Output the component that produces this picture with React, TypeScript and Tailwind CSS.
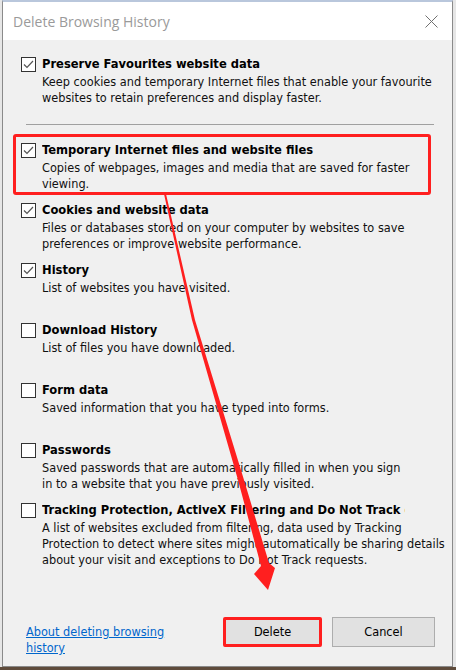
import React from "react";

const items = [
  {
    title: "Temporary Internet files and website files",
    desc: ["Copies of webpages, images and media that are saved for faster", "viewing."],
    checked: true,
  },
  {
    title: "Cookies and website data",
    desc: ["Files or databases stored on your computer by websites to save", "preferences or improve website performance."],
    checked: true,
  },
  { title: "History", desc: ["List of websites you have visited."], checked: true },
  { title: "Download History", desc: ["List of files you have downloaded."], checked: false },
  { title: "Form data", desc: ["Saved information that you have typed into forms."], checked: false },
  {
    title: "Passwords",
    desc: ["Saved passwords that are automatically filled in when you sign", "in to a website that you have previously visited."],
    checked: false,
  },
  {
    title: "Tracking Protection, ActiveX Filtering and Do Not Track data",
    desc: [
      "A list of websites excluded from filtering, data used by Tracking",
      "Protection to detect where sites might automatically be sharing details",
      "about your visit and exceptions to Do Not Track requests.",
    ],
    checked: false,
  },
];

function Box({ checked }: { checked: boolean }) {
  return (
    <span className="mt-[1px] flex h-[15px] w-[15px] shrink-0 items-center justify-center border border-[#333] bg-white">
      {checked && (
        <svg width="13" height="13" viewBox="0 0 13 13">
          <path d="M2 6.5 L5 9.5 L11 3" fill="none" stroke="#555" strokeWidth="1.2" />
        </svg>
      )}
    </span>
  );
}

function Option({ title, desc, checked }: { title: string; desc: string[]; checked: boolean }) {
  return (
    <div className="flex gap-[6px]">
      <Box checked={checked} />
      <div className="flex flex-col">
        <div className="w-[363px] overflow-hidden whitespace-nowrap text-[12.8px] font-bold leading-[16px] text-black">
          {title}
        </div>
        <div className="mt-[2px] text-[12.6px] leading-[16px] text-[#111]">
          {desc.map((d) => (
            <div key={d} className="whitespace-nowrap">{d}</div>
          ))}
        </div>
      </div>
    </div>
  );
}

export default function App() {
  return (
    <div className="relative h-[670px] w-[456px] overflow-hidden bg-[#e6e6e6] font-['DejaVu_Sans_Condensed','DejaVu_Sans',sans-serif]">
      <div className="ml-[2px] flex h-[667px] w-[451px] flex-col border-x border-b border-t-2 border-x-[#8a8a8a] border-b-[#8a8a8a] border-t-[#b9c7dc]">
        <div className="flex h-[38px] items-center justify-between bg-white pl-[10px] pr-[14px]">
          <span className="font-['Open_Sans',sans-serif] text-[14px] text-[#9a9a9a]">Delete Browsing History</span>
          <svg width="13" height="13" viewBox="0 0 13 13">
            <path d="M0.5 0.5 L12.5 12.5 M12.5 0.5 L0.5 12.5" stroke="#707070" strokeWidth="1" />
          </svg>
        </div>
        <div className="flex flex-1 flex-col bg-[#f0f0f0] pl-[18px] pr-[17px] pt-[16px]">
          <div className="h-[60px]">
            <Option
              title="Preserve Favourites website data"
              desc={["Keep cookies and temporary Internet files that enable your favourite", "websites to retain preferences and display faster."]}
              checked
            />
          </div>
          <div className="ml-[5px] mr-[1px] mt-[8px] h-px bg-[#a0a0a0]" />
          <div className="mt-[17px] flex flex-col">
            {items.map((it) => (
              <div key={it.title} className="h-[60px]">
                <Option {...it} />
              </div>
            ))}
          </div>
          <div className="mt-auto flex items-start pb-[10px]">
            <a className="ml-[5px] mt-[7px] w-[150px] text-[12.6px] leading-[16px] text-[#0066cc] underline">
              About deleting browsing history
            </a>
            <button className="ml-auto h-[30px] w-[99px] rounded-[2px] border-[3px] border-[#ff1f1f] bg-[#e1e1e1] text-[12.6px] text-black">
              Delete
            </button>
            <button className="ml-[10px] h-[30px] w-[103px] border border-[#adadad] bg-[#e1e1e1] text-[12.6px] text-black">
              Cancel
            </button>
          </div>
        </div>
      </div>
      <div className="h-[3px] bg-[#5e4b3b]" />
      <div className="pointer-events-none absolute left-[13px] top-[134px] h-[61px] w-[418px] rounded-[3px] border-[3px] border-[#ff1f1f]" />
      <svg className="pointer-events-none absolute inset-0" width="456" height="670" viewBox="0 0 456 670">
        <polygon
          points="164,194 192,320 238,480 261,566 254,574 268,590 275,568 269,563 244,480 195,320 166,194"
          fill="#ff1f1f"
        />
      </svg>
    </div>
  );
}
